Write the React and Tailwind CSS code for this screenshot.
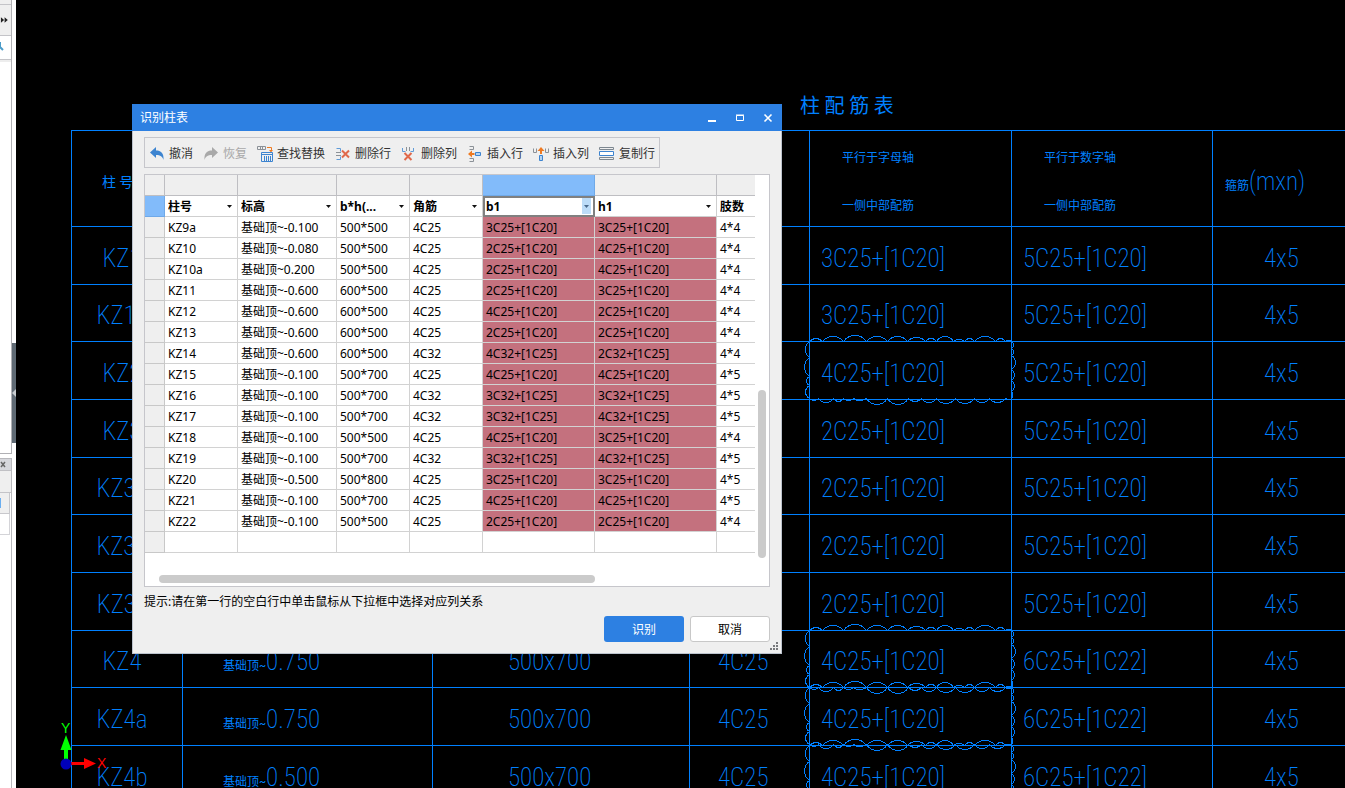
import React from "react";
import clsx from "clsx";

const drawingRows = [
  { name: "KZ1", b: "3C25+[1C20]", h: "5C25+[1C20]", stirrup: "4x5" },
  { name: "KZ1a", b: "3C25+[1C20]", h: "5C25+[1C20]", stirrup: "4x5" },
  { name: "KZ2", b: "4C25+[1C20]", h: "5C25+[1C20]", stirrup: "4x5", cloud: true },
  { name: "KZ3", b: "2C25+[1C20]", h: "5C25+[1C20]", stirrup: "4x5" },
  { name: "KZ3a", b: "2C25+[1C20]", h: "5C25+[1C20]", stirrup: "4x5" },
  { name: "KZ3b", b: "2C25+[1C20]", h: "5C25+[1C20]", stirrup: "4x5" },
  { name: "KZ3c", b: "2C25+[1C20]", h: "5C25+[1C20]", stirrup: "4x5" },
  { name: "KZ4", level: "0.750", size: "500x700", corner: "4C25", b: "4C25+[1C20]", h: "6C25+[1C22]", stirrup: "4x5", cloud: true },
  { name: "KZ4a", level: "0.750", size: "500x700", corner: "4C25", b: "4C25+[1C20]", h: "6C25+[1C22]", stirrup: "4x5", cloud: true },
  { name: "KZ4b", level: "0.500", size: "500x700", corner: "4C25", b: "4C25+[1C20]", h: "6C25+[1C22]", stirrup: "4x5", cloud: true },
];

const columns = [
  { label: "柱号", width: "w-[73px]" },
  { label: "标高", width: "w-[99px]" },
  { label: "b*h(...", width: "w-[73px]" },
  { label: "角筋", width: "w-[73px]" },
  { label: "b1", width: "w-[112px]", selected: true },
  { label: "h1", width: "w-[122px]" },
  { label: "肢数", width: "", clipped: true },
];

const rows = [
  ["KZ9a", "基础顶~-0.100", "500*500", "4C25", "3C25+[1C20]", "3C25+[1C20]", "4*4"],
  ["KZ10", "基础顶~-0.080", "500*500", "4C25", "2C25+[1C20]", "4C25+[1C20]", "4*4"],
  ["KZ10a", "基础顶~0.200", "500*500", "4C25", "2C25+[1C20]", "4C25+[1C20]", "4*4"],
  ["KZ11", "基础顶~-0.600", "600*500", "4C25", "2C25+[1C20]", "3C25+[1C20]", "4*4"],
  ["KZ12", "基础顶~-0.600", "600*500", "4C25", "4C25+[1C20]", "2C25+[1C20]", "4*4"],
  ["KZ13", "基础顶~-0.600", "600*500", "4C25", "2C25+[1C20]", "2C25+[1C20]", "4*4"],
  ["KZ14", "基础顶~-0.600", "600*500", "4C32", "4C32+[1C25]", "2C32+[1C25]", "4*4"],
  ["KZ15", "基础顶~-0.100", "500*700", "4C25", "4C25+[1C20]", "4C25+[1C20]", "4*5"],
  ["KZ16", "基础顶~-0.100", "500*700", "4C32", "3C32+[1C25]", "3C32+[1C25]", "4*5"],
  ["KZ17", "基础顶~-0.100", "500*700", "4C32", "3C32+[1C25]", "4C32+[1C25]", "4*5"],
  ["KZ18", "基础顶~-0.100", "500*500", "4C25", "4C25+[1C20]", "3C25+[1C20]", "4*4"],
  ["KZ19", "基础顶~-0.100", "500*700", "4C32", "3C32+[1C25]", "4C32+[1C25]", "4*5"],
  ["KZ20", "基础顶~-0.500", "500*800", "4C25", "3C25+[1C20]", "3C25+[1C20]", "4*5"],
  ["KZ21", "基础顶~-0.100", "500*700", "4C25", "4C25+[1C20]", "4C25+[1C20]", "4*5"],
  ["KZ22", "基础顶~-0.100", "500*500", "4C25", "2C25+[1C20]", "2C25+[1C20]", "4*4"],
  ["", "", "", "", "", "", ""],
];

// Revision cloud: [end of the arc along the edge, bulge of the arc]
const cloudTop = [[13, 3], [34, 5], [57, 6], [78, 5], [98, 5], [116, 4], [127, 3], [144, 5], [155, 2], [165, 3], [186, 5], [196, 3], [203, 1]];
const cloudBottom = [[9, 2], [24, 4], [34, 3], [44, 2], [57, 2], [78, 6], [99, 6], [112, 3], [127, 4], [146, 5], [165, 5], [180, 4], [196, 4], [203, 1]];
const cloudLeft = [[16, 4], [35, 5], [44, 3], [57, 4]];
const cloudRight = [[7, 2], [14, 2], [28, 4], [39, 3], [50, 3], [57, 1]];

function scallops(arcs, point) {
  let from = 0;
  const parts = [`M${point(0, 0)}`];
  arcs.forEach(([to, bulge]) => {
    const inset = (to - from) / 4;
    const lift = bulge * 1.33;
    parts.push(`C${point(from + inset, lift)} ${point(to - inset, lift)} ${point(to, 0)}`);
    from = to;
  });
  return parts.join(" ");
}

const cloudPath = [
  scallops(cloudTop, (t, d) => `${6.5 + t},${8.5 - d}`),
  scallops(cloudBottom, (t, d) => `${6.5 + t},${65.5 + d}`),
  scallops(cloudLeft, (t, d) => `${6.5 - d},${8.5 + t}`),
  scallops(cloudRight, (t, d) => `${208.5 + d},${8.5 + t}`),
].join(" ");

function RevisionCloud() {
  return (
    <svg className="absolute -left-[7px] -top-[9px] h-[74px] w-[216px]" viewBox="0 0 216 74" fill="none" stroke="#0080ff" shapeRendering="crispEdges">
      <path d={cloudPath} />
    </svg>
  );
}

function SidePanel() {
  return (
    <aside className="flex w-4 shrink-0 bg-white">
      <div className="flex w-3 flex-col">
        <div className="h-[454px] border-r border-b border-[#b0b0b4]">
          <div className="h-[5px] border-b border-[#c4c4c8] bg-[#efefef]" />
          <button aria-label="展开" className="flex h-[31px] w-full items-center border-b border-[#c4c4c8] bg-[#efefef]">
            <svg className="h-2 w-3" viewBox="0 0 12 8" fill="#222">
              <path d="M1 1l3.5 3L1 7zM5 1l3.500 3L5 7z" />
            </svg>
          </button>
          <div className="h-[19px] border-b border-[#c4c4c8]">
            <svg className="mt-[5px] h-3 w-3" viewBox="0 0 12 12" fill="none">
              <path d="M0 1v5l3 3" stroke="#4b9cc9" strokeWidth="2" />
            </svg>
          </div>
          <div className="h-0.5 bg-[#ededed]" />
        </div>
        <div className="h-1" />
        <div className="flex-1 border-t border-r border-[#b8b8bc] bg-white">
          <button aria-label="关闭" className="block h-3 w-full border-b border-[#c0c0c4] bg-[#d6d7dc]">
            <svg className="h-[11px] w-full" viewBox="0 0 11 11" stroke="#666" strokeWidth="1.500">
              <path d="M1 3l4 5M5 3L1 8" />
            </svg>
          </button>
          <div className="h-[22px] border-b border-[#c4c4c8] bg-[#efefef]" />
          <div className="mr-px flex h-[21px] items-center border-r border-b border-[#c8c8cc] bg-[#efefef]">
            <div className="h-2.5 w-px bg-[#6aaef0]" />
          </div>
          <div className="mr-px h-[21px] border-r border-b border-[#d4d4d8]" />
        </div>
      </div>
      <div className="flex flex-col pt-[343px]">
        <button aria-label="收起" className="flex h-[100px] w-1 items-center bg-[#5f6a74]">
          <svg className="h-2 w-1" viewBox="0 0 4 8" fill="#c8ccd0">
            <path d="M4 0L0 4l4 4z" />
          </svg>
        </button>
      </div>
    </aside>
  );
}

function DrawingTable() {
  const line = "border-t border-l border-[#0080ff] p-0";
  const heights = ["h-[58px]", "h-[57px]", "h-[58px]"];
  return (
    <div className="ml-[55px] font-['Roboto_Condensed','Liberation_Sans_Narrow','Noto_Sans_CJK_SC',sans-serif] font-extralight text-[#0080ff]">
      <table className="w-full table-fixed border-separate border-spacing-0 text-left text-[25px] leading-[48px] whitespace-nowrap">
        <caption className="h-[130px] pt-[82px] pl-[729px] text-left text-[20px] font-normal">柱 配 筋 表</caption>
        <colgroup>
          <col className="w-[111px]" />
          <col className="w-[250px]" />
          <col className="w-[257px]" />
          <col className="w-[120px]" />
          <col className="w-[202px]" />
          <col className="w-[201px]" />
          <col />
        </colgroup>
        <thead>
          <tr className="h-24 text-[12px]">
            <th className={clsx(line, "pt-1.5 pl-[30px] text-[14px] font-normal")}>柱 号</th>
            <th className={line} />
            <th className={line} />
            <th className={line} />
            <th className={clsx(line, "pt-[17px] pl-8 align-top leading-[20px] font-normal")}>
              <div className="mb-7">平行于字母轴</div>
              <div>一侧中部配筋</div>
            </th>
            <th className={clsx(line, "pt-[17px] pl-8 align-top leading-[20px] font-normal")}>
              <div className="mb-7">平行于数字轴</div>
              <div>一侧中部配筋</div>
            </th>
            <th className={clsx(line, "pt-1.5 pl-3 text-[25px] font-extralight")}>
              <span className="text-[12px] leading-none font-normal">箍筋</span>(mxn)
            </th>
          </tr>
        </thead>
        <tbody>
          {drawingRows.map((row, i) => (
            <tr key={row.name} className={heights[i % 3]}>
              <td className={clsx(line, "pt-1.5 pr-2.5 text-center")}>{row.name}</td>
              <td className={clsx(line, "pt-1.5 pl-10")}>
                {row.level && <><span className="text-[12px] leading-none font-normal">基础顶~</span>{row.level}</>}
              </td>
              <td className={clsx(line, "pt-1.5 pl-[75px]")}>{row.size}</td>
              <td className={clsx(line, "pt-1.5 pl-7")}>{row.corner}</td>
              <td className={clsx(line, "relative pt-1.5 pl-[11px]")}>
                {row.b}
                {row.cloud && <RevisionCloud />}
              </td>
              <td className={clsx(line, "pt-1.5 pl-[11px]")}>{row.h}</td>
              <td className={clsx(line, "pt-1.5 pl-[51px]")}>{row.stirrup}</td>
            </tr>
          ))}
        </tbody>
      </table>
    </div>
  );
}

function AxisMarker() {
  return (
    <svg className="absolute bottom-0 left-10 h-[70px] w-[60px]" viewBox="0 0 60 70">
      <path d="M8 45V32H4.500L10 17l5.500 15H12v13z" fill="#00ff00" />
      <path d="M15 44h13v-4l12 5.500L28 51v-4H15z" fill="#ff0000" />
      <circle cx="10" cy="46" r="5.500" fill="#0000b8" />
      <text x="5" y="15" fontSize="14" fill="#00ff00" fontFamily="Liberation Sans">Y</text>
      <text x="41" y="50" fontSize="14" fill="#ff0000" fontFamily="Liberation Sans">X</text>
    </svg>
  );
}

const icons = {
  undo: (
    <path d="M1 6.500L7 1v3.500c5 0 8 2.500 7.500 9.500-1-3.500-3-5-7.500-5V12z" fill="#3d84d0" />
  ),
  redo: (
    <path d="M15 6.500L9 1v3.500C4 4.500 1 7 1.500 14c1-3.500 3-5 7.500-5V12z" fill="#a9a9a9" />
  ),
  replace: (
    <g fill="none">
      <path d="M.5.5h8v3h-8zM3.500.5v3M5.500.5v3" stroke="#8b9197" />
      <path d="M10 1.500h4.500v3" stroke="#ee7a22" />
      <path d="M12 4h4l-2 2.500z" fill="#ee7a22" />
      <path d="M4.500 6.500h11v9h-11zM5 8.500h10M7.500 10v5M9.500 10v5M11.500 10v5M13.500 10v5" stroke="#3d84d0" />
    </g>
  ),
  deleteRow: (
    <g fill="none">
      <path d="M1.500 2.500h4v3M1.500 13.500h4v-3" stroke="#5f9bd8" />
      <path d="M1 6.500h5M1 9.500h5" stroke="#8b9197" />
      <path d="M7 4.500l7 7M14 4.500l-7 7" stroke="#e0694b" strokeWidth="2" />
    </g>
  ),
  deleteColumn: (
    <g fill="none">
      <path d="M1.500 2v3.500h3M12.500 2v3.500h-3" stroke="#5f9bd8" />
      <path d="M5.500 1v4M8.500 1v4" stroke="#8b9197" />
      <path d="M3.500 7l7 7M10.500 7l-7 7" stroke="#e0694b" strokeWidth="2" />
    </g>
  ),
  insertRow: (
    <g fill="none">
      <path d="M2.500 .5h4v3h-4M2.500 12.500h4v3h-4" stroke="#8b9197" />
      <path d="M1 8L5 4.500V7h2.500v2H5v2.500z" fill="#ee7a22" />
      <path d="M8.500 6.500h5v3h-5z" stroke="#3d84d0" fill="#b5d4f2" />
    </g>
  ),
  insertColumn: (
    <g fill="none">
      <path d="M.5 2.500v4h3v-4M12.500 2.500v4h3v-4" stroke="#8b9197" />
      <path d="M8 1L4.500 5H7v3h2V5h2.500z" fill="#ee7a22" />
      <path d="M6.500 9.500h3v5h-3z" stroke="#3d84d0" fill="#b5d4f2" />
    </g>
  ),
  copyRow: (
    <g fill="none">
      <path d="M.5 1.500h14v2h-14zM.5 11.500h14v2h-14z" stroke="#7d8790" />
      <path d="M.5 5.500h14v4h-14z" stroke="#3d84d0" fill="#fff" />
    </g>
  ),
};

const tools = [
  ["撤消", "undo"],
  ["恢复", "redo"],
  ["查找替换", "replace"],
  ["删除行", "deleteRow"],
  ["删除列", "deleteColumn"],
  ["插入行", "insertRow"],
  ["插入列", "insertColumn"],
  ["复制行", "copyRow"],
];

function Toolbar() {
  return (
    <div className="flex h-[31px] items-center gap-2.5 self-start border border-[#c6c6cb] px-1 pt-0.5">
      {tools.map(([label, icon]) => (
        <button key={label} disabled={icon === "redo"} className="flex items-center gap-1 text-[#333] disabled:text-[#a8a8a8]">
          <svg className="h-4 w-4" viewBox="0 0 16 16">{icons[icon]}</svg>
          {label}
        </button>
      ))}
    </div>
  );
}

function ColumnGrid() {
  return (
    <div className="mt-1.5 flex h-[413px] flex-col border border-[#c6c6cb] bg-white">
      <div className="flex flex-1">
        <div className="flex-1">
          <table className="w-full table-fixed border-separate border-spacing-0 text-left leading-[18px] whitespace-nowrap text-black">
            <thead>
              <tr className="h-[21px]">
                <td className="w-5 border-r border-b border-[#bebec2] bg-[#efefef]" />
                {columns.map((col) => (
                  <td
                    key={col.label}
                    className={clsx(
                      "border-b p-0",
                      col.width,
                      !col.clipped && "border-r",
                      col.selected ? "border-[#6fa9e8] bg-[#82bbfa]" : "border-[#bebec2] bg-[#efefef]"
                    )}
                  />
                ))}
              </tr>
              <tr className="h-[21px]">
                <td className="border-r border-b border-[#6fa9e8] bg-[#82bbfa]" />
                {columns.map((col) => (
                  <th
                    key={col.label}
                    className={clsx(
                      "relative border-b border-[#cfcfcf] p-0",
                      !col.clipped && "border-r",
                      col.selected && "outline-2 -outline-offset-2 outline-[#808080]"
                    )}
                  >
                    <select aria-label={col.label} className="block h-5 w-full appearance-none pt-0.5 pl-[3px] font-bold leading-[18px] outline-none">
                      <option>{col.label}</option>
                    </select>
                    {!col.clipped && (
                      <span
                        className={clsx(
                          "pointer-events-none absolute top-0.5 right-[3px] flex h-4 w-[9px] items-center justify-center",
                          col.selected && "bg-[#bcdcf8]"
                        )}
                      >
                        <svg className="h-[3px] w-[5px]" viewBox="0 0 5 3" fill={col.selected ? "#4a6a8c" : "#111"}>
                          <path d="M0 0h5L2.500 3z" />
                        </svg>
                      </span>
                    )}
                  </th>
                ))}
              </tr>
            </thead>
            <tbody>
              {rows.map((row, i) => (
                <tr key={i} className="h-[21px]">
                  <td className="border-r border-b border-[#c8c8c8] bg-[#efefef] p-0" />
                  {row.map((cell, c) => (
                    <td
                      key={c}
                      className={clsx(
                        "border-b border-[#d2d2d2] p-0 pt-0.5 pl-[3px]",
                        c < 6 && "border-r",
                        cell && (c === 4 || c === 5) && "bg-[#c4717e]"
                      )}
                    >
                      {cell}
                    </td>
                  ))}
                </tr>
              ))}
            </tbody>
          </table>
        </div>
        <div className="flex w-3.5 flex-col pt-[215px] pl-[3px]">
          <div className="h-[168px] w-2 rounded-full bg-[#cbcbcb]" />
        </div>
      </div>
      <div className="h-[11px] pl-3.5">
        <div className="h-2 w-[436px] rounded-full bg-[#cbcbcb]" />
      </div>
    </div>
  );
}

function RecognizeDialog() {
  return (
    <div
      role="dialog"
      aria-labelledby="dialog-title"
      className="absolute top-[104px] left-[116px] flex h-[550px] w-[650px] flex-col bg-[#efefef] font-['Noto_Sans','Noto_Sans_CJK_SC',sans-serif] text-[12px] leading-[16px]"
    >
      <div className="flex h-[27px] shrink-0 items-center justify-between bg-[#2d80e2] px-2 text-white">
        <h1 id="dialog-title">识别柱表</h1>
        <div className="flex gap-4">
          <button aria-label="最小化">
            <svg className="h-3 w-3" viewBox="0 0 12 12"><path d="M2 9h8" stroke="#fff" strokeWidth="2" /></svg>
          </button>
          <button aria-label="最大化">
            <svg className="h-3 w-3" viewBox="0 0 12 12" fill="none" stroke="#fff"><path d="M2.500 3.500h7v5h-7zM2 3h8" /></svg>
          </button>
          <button aria-label="关闭对话框">
            <svg className="h-3 w-3" viewBox="0 0 12 12"><path d="M2.500 2.500l7 7M9.500 2.500l-7 7" stroke="#fff" strokeWidth="1.600" /></svg>
          </button>
        </div>
      </div>
      <div className="relative flex flex-1 flex-col border-x border-b border-[#bcc3cd] px-[11px] pt-1.5">
        <Toolbar />
        <ColumnGrid />
        <p className="mt-[7px] text-black">提示:请在第一行的空白行中单击鼠标从下拉框中选择对应列关系</p>
        <div className="mt-1.5 flex justify-end gap-1.5">
          <button className="h-[26px] w-20 rounded-[3px] bg-[#2d80e2] pt-0.5 text-white">识别</button>
          <button className="h-[26px] w-20 rounded-[3px] border border-[#c8c8c8] bg-white pt-0.5 text-black">取消</button>
        </div>
        <svg className="absolute right-[3px] bottom-[3px] h-2 w-2" viewBox="0 0 8 8" fill="#77797c">
          <path d="M6 0h2v2H6zM3 3h2v2H3zM6 3h2v2H6zM0 6h2v2H0zM3 6h2v2H3zM6 6h2v2H6z" />
        </svg>
      </div>
    </div>
  );
}

export default function App() {
  return (
    <div className="flex h-screen overflow-hidden bg-black">
      <SidePanel />
      <main className="relative min-w-0 flex-1 overflow-hidden">
        <DrawingTable />
        <AxisMarker />
        <RecognizeDialog />
      </main>
    </div>
  );
}
